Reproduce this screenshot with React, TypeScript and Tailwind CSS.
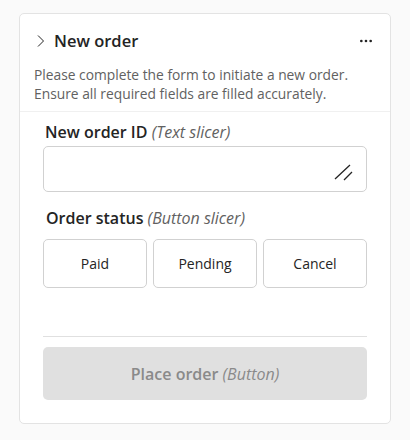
import { MoreHorizontal } from "lucide-react";

const font = { fontFamily: '"Open Sans", "Noto Sans", sans-serif' };

const App = () => {
  const statuses = ["Paid", "Pending", "Cancel"];

  return (
    <div className="min-h-[440px] bg-[#fafafa] pt-[13px] px-[19px]" style={font}>
      <div className="h-[411px] bg-white border border-[#e3e3e3] rounded-[5px] flex flex-col">
        {/* Header */}
        <div className="pt-[8px] pl-[16px] pr-[16px] flex items-center h-[38px] box-content">
          <svg width="10" height="14" viewBox="0 0 10 14" className="text-[#242424] mr-[8px]">
            <path d="M2 1.5 L7.5 7 L2 12.5" fill="none" stroke="currentColor" strokeWidth="1" />
          </svg>
          <span className="text-[16.5px] leading-[22px] font-semibold text-[#242424]">New order</span>
          <MoreHorizontal size={16} strokeWidth={2} className="ml-auto text-[#242424]" />
        </div>

        {/* Description */}
        <p className="px-[14px] text-[13.8px] leading-[19px] text-[#616161] mt-[5px]">
          Please complete the form to initiate a new order.
          <br />
          Ensure all required fields are filled accurately.
        </p>

        <div className="mt-[8px] border-t border-[#f0f0f0]" />

        {/* Body */}
        <div className="px-[23px] flex-1 flex flex-col pb-[23px]">
          <label className="block mt-[9px] pl-[2px] text-[16px] leading-[22px] font-semibold text-[#242424]">
            New order ID <span className="italic font-normal text-[#616161]">(Text slicer)</span>
          </label>
          <div className="relative mt-[3px] h-[46px] border border-[#d1d1d1] rounded-[5px]">
            <svg width="20" height="18" viewBox="0 0 20 18" className="absolute right-[12px] top-[16px] text-[#242424]">
              <path d="M1 16 L16 2 M10 17 L18 9" fill="none" stroke="currentColor" strokeWidth="1.3" />
            </svg>
          </div>

          <label className="block mt-[15px] pl-[3px] text-[16px] leading-[22px] font-semibold text-[#242424]">
            Order status <span className="italic font-normal text-[#616161]">(Button slicer)</span>
          </label>
          <div className="mt-[10px] grid grid-cols-3 gap-[6px]">
            {statuses.map((s) => (
              <button
                key={s}
                className="h-[49px] border border-[#d1d1d1] rounded-[5px] bg-white text-[14px] text-[#242424]"
              >
                {s}
              </button>
            ))}
          </div>

          <div className="mt-auto border-t border-[#e0e0e0]" />
          <button className="mt-[10px] h-[53px] w-full rounded-[5px] bg-[#e0e0e0] text-[16px] font-semibold text-[#8a8a8a]">
            Place order <span className="italic font-normal">(Button)</span>
          </button>
        </div>
      </div>
    </div>
  );
};

export default App;
